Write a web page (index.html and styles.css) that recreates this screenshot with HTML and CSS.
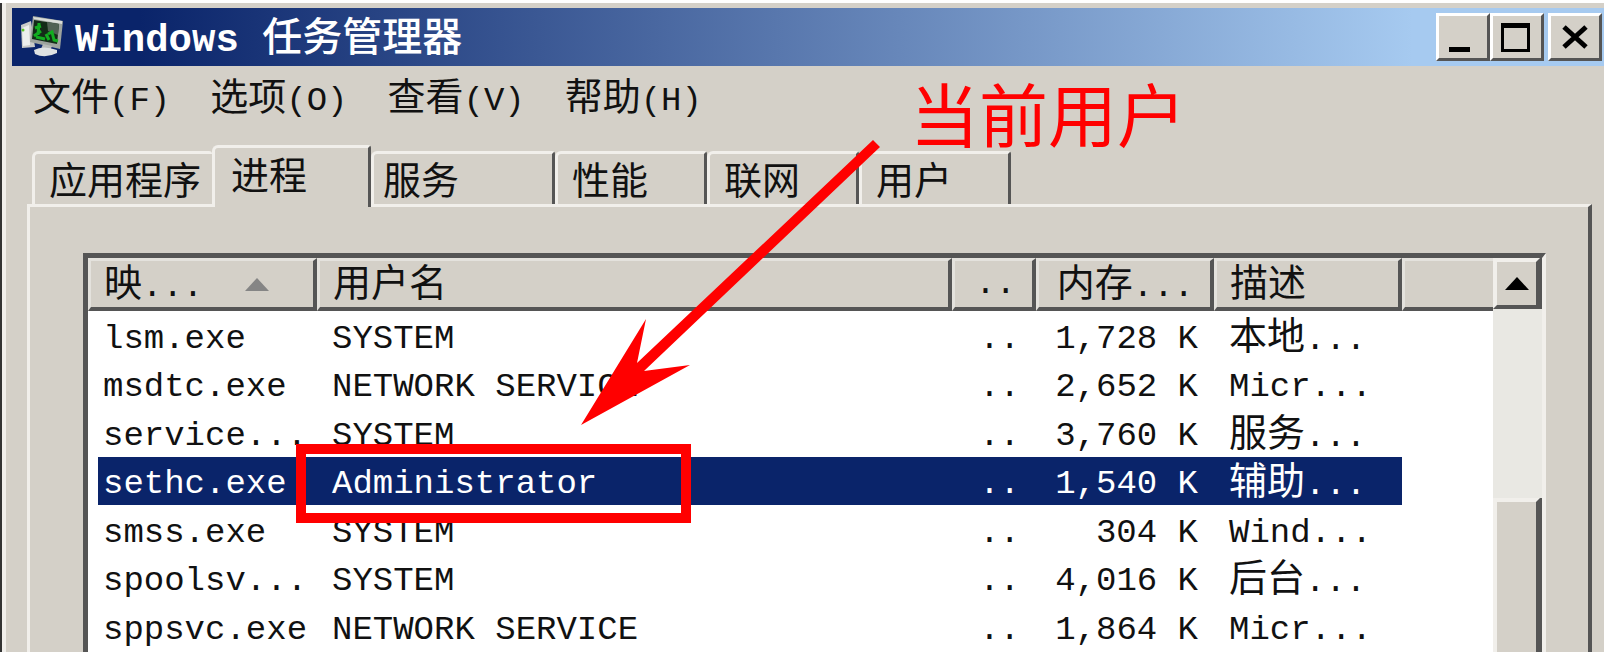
FILE: index.html
```html
<!DOCTYPE html>
<html lang="zh-CN">
<head>
<meta charset="utf-8">
<title>Windows 任务管理器</title>
<link rel="stylesheet" href="styles.css">
</head>
<body>
<main class="window">
  <header class="titlebar">
    <svg class="app-icon" viewBox="0 0 42 42" aria-hidden="true">
      <path d="M0 9 L10 5 L14 31 L1 32 Z" fill="#c9cac8"/>
      <path d="M1 12 L8 9 L9 29 L2 30 Z" fill="#eceeed"/>
      <circle cx="2" cy="14" r="1.5" fill="#5bc422"/>
      <path d="M12 0 L42 5 L39 33 L9 26 Z" fill="#9da39d"/>
      <path d="M12 1 L41 5 L41 8 L13 3 Z" fill="#d9dcd8"/>
      <path d="M13 4 L38 8 L36 28 L11 23 Z" fill="#142b18"/>
      <path d="M26 6 L38 8 L37 19 L27 15 Z" fill="#516154"/>
      <path d="M18 7 L17 19 M20 10 L14 12 M20 15 L13 20 M15 21 L24 23 M25 18 L28 24 M27 18 L31 16 L33 24 L37 25" stroke="#13ad20" stroke-width="3" fill="none"/>
      <path d="M22 28 L31 30 L29 35 L20 33 Z" fill="#b7bab8"/>
      <path d="M13 34 Q22 29 36 34 L36 37 Q24 43 14 38 Z" fill="#dfe2e3"/>
    </svg>
    <h1 class="title">Windows <span class="title-cjk">任务管理器</span></h1>
    <div class="controls">
      <button class="control" type="button" aria-label="最小化"><svg viewBox="0 0 48 42"><path d="M10 31h21v5H10z"/></svg></button>
      <button class="control" type="button" aria-label="最大化"><svg viewBox="0 0 48 42"><path fill-rule="evenodd" d="M8 7h29v29H8zM11 12v21h23V12z"/></svg></button>
      <button class="control control-close" type="button" aria-label="关闭"><svg viewBox="0 0 48 42"><path d="M13 11l22 20M35 11L13 31" stroke="#000" stroke-width="5"/></svg></button>
    </div>
  </header>

  <nav class="menu">
    <button type="button"><span class="cjk">文件</span>(F)</button>
    <button type="button"><span class="cjk">选项</span>(O)</button>
    <button type="button"><span class="cjk">查看</span>(V)</button>
    <button type="button"><span class="cjk">帮助</span>(H)</button>
  </nav>

  <div class="tabs" role="tablist">
    <button class="tab tab-apps cjk" type="button" role="tab">应用程序</button>
    <button class="tab tab-active cjk" type="button" role="tab" aria-selected="true">进程</button>
    <button class="tab tab-services cjk" type="button" role="tab">服务</button>
    <button class="tab cjk" type="button" role="tab">性能</button>
    <button class="tab cjk" type="button" role="tab">联网</button>
    <button class="tab cjk" type="button" role="tab">用户</button>
  </div>

  <section class="panel">
    <div class="list">
      <table class="processes">
        <colgroup>
          <col class="col-image"><col><col class="col-cpu"><col class="col-memory"><col class="col-desc"><col class="col-rest">
        </colgroup>
        <thead>
          <tr>
            <th><div class="sort"><span><span class="cjk">映</span>...</span><svg viewBox="0 0 24 13" aria-hidden="true"><path d="M0 13L12 0l12 13z"/></svg></div></th>
            <th><span class="cjk">用户名</span></th>
            <th class="number">..</th>
            <th class="number"><span class="cjk">内存</span>...</th>
            <th><span class="cjk">描述</span></th>
            <th class="rest"></th>
          </tr>
        </thead>
        <tbody>
          <tr><td>lsm.exe</td><td>SYSTEM</td><td class="number">..</td><td class="number">1,728 K</td><td><span class="cjk">本地</span>...</td><td></td></tr>
          <tr><td>msdtc.exe</td><td>NETWORK SERVICE</td><td class="number">..</td><td class="number">2,652 K</td><td>Micr...</td><td></td></tr>
          <tr><td>service...</td><td>SYSTEM</td><td class="number">..</td><td class="number">3,760 K</td><td><span class="cjk">服务</span>...</td><td></td></tr>
          <tr class="selected"><td>sethc.exe</td><td>Administrator</td><td class="number">..</td><td class="number">1,540 K</td><td><span class="cjk">辅助</span>...</td><td></td></tr>
          <tr><td>smss.exe</td><td>SYSTEM</td><td class="number">..</td><td class="number">304 K</td><td>Wind...</td><td></td></tr>
          <tr><td>spoolsv...</td><td>SYSTEM</td><td class="number">..</td><td class="number">4,016 K</td><td><span class="cjk">后台</span>...</td><td></td></tr>
          <tr><td>sppsvc.exe</td><td>NETWORK SERVICE</td><td class="number">..</td><td class="number">1,864 K</td><td>Micr...</td><td></td></tr>
        </tbody>
      </table>
      <div class="scrollbar">
        <button class="scroll-up" type="button" aria-label="向上滚动"><svg viewBox="0 0 24 13"><path d="M0 13L12 0l12 13z"/></svg></button>
        <div class="track"></div>
        <div class="thumb"></div>
      </div>
    </div>
  </section>
</main>

<div class="highlight"></div>
<svg class="arrow" viewBox="0 0 300 286" aria-hidden="true"><path d="M292 0L299 7L63 231L109 225L0 285L65 179L56 223Z"/></svg>
<p class="callout">当前用户</p>
</body>
</html>
```
FILE: styles.css
```css
* { box-sizing: border-box; }

body {
  position: relative;
  height: 100vh;
  margin: 0;
  padding: 3px 3px 0 0;
  overflow: hidden;
  background: #fff;
  color: #111;
  font: 34px/48px "Liberation Mono", "Noto Sans CJK SC", monospace;
}

button {
  padding: 0;
  border: 0;
  background: none;
  color: inherit;
  font: inherit;
}

.cjk {
  font-family: "Noto Sans CJK SC", sans-serif;
  font-size: 38px;
  font-weight: 400;
  line-height: 38px;
}

.window {
  display: flex;
  flex-direction: column;
  height: 100%;
  padding: 5px 0 0 6px;
  border-left: 2px solid #333;
  background: #d4d0c8;
  box-shadow: inset 4px 0 #f1efeb;
}

.titlebar {
  display: flex;
  flex: none;
  align-items: center;
  height: 58px;
  margin-left: 4px;
  padding: 0 2px 0 9px;
  background: linear-gradient(90deg, #0a246a 8%, #a6caf0 88%);
}

.app-icon { width: 42px; height: 42px; }

.title {
  flex: 1;
  margin: 0 0 0 12px;
  padding-top: 4px;
  color: #fff;
  font-size: 39px;
  font-weight: 700;
  line-height: 48px;
  white-space: pre;
}

.title-cjk {
  font-family: "Noto Sans CJK SC", sans-serif;
  font-size: 40px;
  font-weight: 500;
  line-height: 40px;
}

.controls { display: flex; }

.control {
  width: 54px;
  height: 48px;
  border: 3px solid;
  border-color: #fff #555 #555 #fff;
  background: #d4d0c8;
}

.control svg { display: block; width: 48px; height: 42px; }
.control-close { margin-left: 4px; }

.menu {
  display: flex;
  flex: none;
  gap: 40px;
  height: 79px;
  padding: 9px 0 0 25px;
}

.menu button { height: 48px; white-space: nowrap; }

.tabs {
  display: flex;
  flex: none;
  align-items: flex-end;
  height: 59px;
  padding-left: 24px;
}

.tab {
  width: 152px;
  height: 53px;
  padding: 0 0 3px 14px;
  border: 3px solid;
  border-color: #f1efeb #555 transparent #f1efeb;
  border-bottom: 0;
  border-radius: 6px 3px 0 0;
  text-align: left;
}

.tab-apps { width: 180px; border-right: 0; }

.tab-active {
  z-index: 1;
  width: 159px;
  height: 62px;
  margin-bottom: -3px;
  padding: 0 0 10px 16px;
  background: #d4d0c8;
}

.tab-services { width: 184px; padding-left: 9px; }

.panel {
  flex: 1;
  min-height: 0;
  margin: 0 12px 0 19px;
  padding: 46px 42px 0 53px;
  border: solid;
  border-width: 3px 4px 0 3px;
  border-color: #f1efeb #555 transparent #f1efeb;
}

.list {
  display: flex;
  height: 100%;
  border: solid;
  border-width: 5px 4px 0 5px;
  border-color: #555 #f1efeb transparent #555;
  background: #fff;
  overflow: hidden;
}

.processes {
  flex: 1;
  align-self: flex-start;
  width: 0;
  border-spacing: 0;
  table-layout: fixed;
}

.col-image { width: 229px; }
.col-cpu { width: 84px; }
.col-memory { width: 178px; }
.col-desc { width: 188px; }
.col-rest { width: 91px; }

th {
  height: 53px;
  padding: 0 0 0 13px;
  border: solid;
  border-width: 3px 4px 4px 3px;
  border-color: #e4e2dd #555 #555 #e4e2dd;
  background: #d4d0c8;
  font-weight: 400;
  line-height: 40px;
  text-align: left;
  white-space: nowrap;
}

.rest { border-right: 0; }

.sort {
  display: flex;
  align-items: center;
  justify-content: space-between;
  padding-right: 44px;
}

.sort svg { width: 24px; height: 13px; fill: #858585; }

td {
  height: 48px;
  padding: 6px 0 0 15px;
  line-height: 38px;
  white-space: nowrap;
}

td .cjk { line-height: 28px; }

tr:nth-child(odd) td { height: 49px; }
td:first-child { padding-left: 5px; border-left: 10px solid #fff; }
th.number { padding: 0 16px 0 0; text-align: right; }
td.number { padding: 6px 16px 0 0; text-align: right; }

.selected td { background: #0a246a; color: #fff; }
.selected td:last-child { background: #fff; }

.scrollbar {
  display: flex;
  flex: none;
  flex-direction: column;
  width: 49px;
  border-right: 2px solid #555;
  background: #e9e8e3;
}

.scroll-up {
  display: flex;
  align-items: center;
  justify-content: center;
  height: 51px;
  border: 4px solid;
  border-color: #f1efeb #555 #555 #f1efeb;
  background: #d4d0c8;
}

.scroll-up svg { flex: none; width: 24px; height: 13px; }
.track { height: 189px; margin-right: -2px; background: #e9e8e3; }

.thumb {
  flex: 1;
  border: 4px solid;
  border-color: #f1efeb #555 transparent #f1efeb;
  border-bottom: 0;
  background: #d4d0c8;
}

.highlight {
  position: absolute;
  top: 444px;
  left: 296px;
  width: 395px;
  height: 79px;
  border: 10px solid #f00;
}

.arrow {
  position: absolute;
  top: 140px;
  left: 581px;
  width: 300px;
  height: 286px;
  fill: #f00;
}

.callout {
  position: absolute;
  top: 76px;
  left: 910px;
  margin: 0;
  color: #f00;
  font: 69px/72px "Noto Sans CJK SC", sans-serif;
}
```
